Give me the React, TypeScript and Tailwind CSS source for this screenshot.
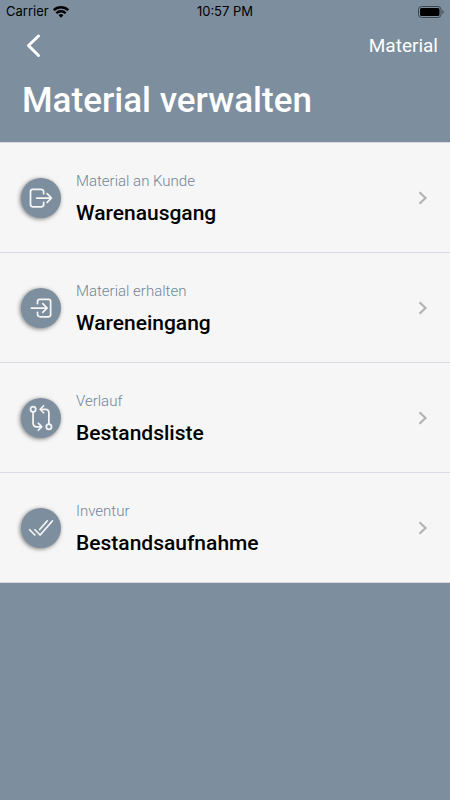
import type { IconType } from 'react-icons';
import {
	IoCheckmarkDoneOutline,
	IoGitCompareOutline,
	IoLogInOutline,
	IoLogOutOutline,
} from 'react-icons/io5';

interface IMenuItem {
	label: string;
	title: string;
	href: string;
	icon: IconType;
}

const menuItems: IMenuItem[] = [
	{
		label: 'Material an Kunde',
		title: 'Warenausgang',
		href: '#warenausgang',
		icon: IoLogOutOutline,
	},
	{
		label: 'Material erhalten',
		title: 'Wareneingang',
		href: '#wareneingang',
		icon: IoLogInOutline,
	},
	{
		label: 'Verlauf',
		title: 'Bestandsliste',
		href: '#bestandsliste',
		icon: IoGitCompareOutline,
	},
	{
		label: 'Inventur',
		title: 'Bestandsaufnahme',
		href: '#bestandsaufnahme',
		icon: IoCheckmarkDoneOutline,
	},
];

function WifiIcon() {
	return (
		<svg viewBox="0 0 16 12" className="h-3 w-4" fill="none" stroke="black" strokeWidth="2.3">
			<path d="M.7 4.3a10.3 10.3 0 0 1 14.6 0" />
			<path d="M3.3 7.2a6.6 6.6 0 0 1 9.4 0" />
			<path d="M8 11.8 5.6 9.3a3.4 3.4 0 0 1 4.8 0z" fill="black" stroke="none" />
		</svg>
	);
}

function BatteryIcon() {
	return (
		<svg viewBox="0 0 26 12" className="h-3 w-[26px]">
			<rect x=".5" y=".5" width="22.5" height="11" rx="3" fill="none" stroke="#3c444c" />
			<rect x="2" y="2" width="19.5" height="8" rx="1.5" />
			<path d="M24.4 4v4c1.6-.6 1.6-3.4 0-4z" fill="#3c444c" />
		</svg>
	);
}

function StatusBar() {
	return (
		<div className="grid h-6 grid-cols-3 items-center px-1.5 pb-px font-['Inter',sans-serif] text-[13px] text-black">
			<div className="flex items-center gap-1">
				<span>Carrier</span>
				<WifiIcon />
			</div>
			<span className="text-center">10:57 PM</span>
			<div className="flex justify-end">
				<BatteryIcon />
			</div>
		</div>
	);
}

function Header() {
	return (
		<header className="text-white">
			<div className="flex h-11 items-center justify-between pr-3 pl-5">
				<button type="button" aria-label="Zurück" className="p-1">
					<svg
						viewBox="0 0 20 26"
						className="h-[26px] w-5"
						fill="none"
						stroke="currentColor"
						strokeWidth="3"
						strokeLinecap="round"
						strokeLinejoin="round"
					>
						<path d="M14.5 3 4.5 12.5l10 10" />
					</svg>
				</button>
				<span className="text-[19px]">Material</span>
			</div>
			<h1 className="px-[22px] pt-3 pb-5 text-[35px] leading-[42px] font-medium">
				Material verwalten
			</h1>
		</header>
	);
}

function MenuRow({ item }: { item: IMenuItem }) {
	const Icon = item.icon;

	return (
		<li className="border-b border-[#dadae4]">
			<a href={item.href} className="flex items-center gap-[15px] py-6 pr-5 pl-[21px]">
				<div className="flex size-10 shrink-0 items-center justify-center rounded-full bg-[#7d8e9e] text-[#f6f6f6] shadow-[-1px_1px_4px_rgba(0,0,0,0.5)]">
					<Icon size={28} />
				</div>
				<div className="flex grow flex-col gap-1">
					<span className="text-[15px] leading-7 font-light text-[#6f859b]">{item.label}</span>
					<span className="text-[21px] leading-[29px] font-medium text-black">{item.title}</span>
				</div>
				<svg
					viewBox="0 0 14 14"
					className="size-3.5 shrink-0"
					fill="none"
					stroke="#b3b3b3"
					strokeWidth="2.2"
				>
					<path d="m3.5 1.2 6 5.8-6 5.8" />
				</svg>
			</a>
		</li>
	);
}

export default function App() {
	return (
		<div className="min-h-screen bg-[#7d8e9e] font-['Roboto',sans-serif]">
			<StatusBar />
			<Header />
			<ul className="border-t border-[#dadae4] bg-[#f6f6f6]">
				{menuItems.map((item) => (
					<MenuRow key={item.title} item={item} />
				))}
			</ul>
		</div>
	);
}
